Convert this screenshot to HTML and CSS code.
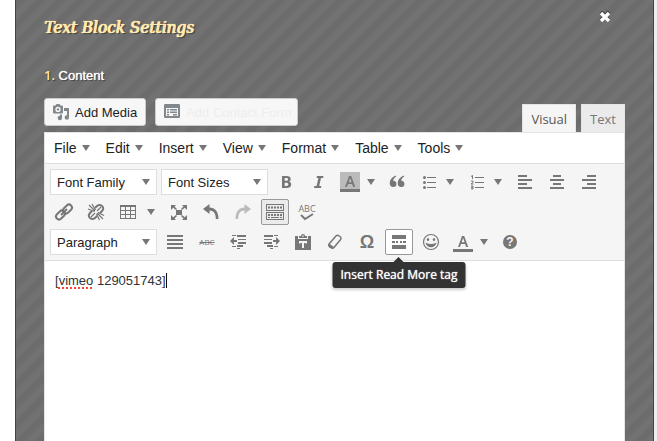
FILE: index.html
```html
<!DOCTYPE html>
<html lang="en">
<head>
<meta charset="utf-8">
<title>Text Block Settings</title>
<link rel="stylesheet" href="styles.css">
</head>
<body>
<main class="panel">
  <header class="panel-head">
    <h1>Text Block Settings</h1>
    <button class="close" type="button" aria-label="Close">
      <svg width="12" height="12" viewBox="0 0 12 12"><path d="M2 2l8 8M10 2l-8 8" stroke="#fff" stroke-width="3.4"/></svg>
    </button>
  </header>
  <h2><span class="step">1.</span> Content</h2>

  <div class="media-row">
    <div class="media-buttons">
      <button class="media" type="button">
        <svg width="18" height="18" viewBox="0 0 18 18" fill="#82878c"><path fill-rule="evenodd" d="M2 2.500h1.500l1-1.500h3l1 1.500h1.500q1 0 1 1v6q0 1-1 1H2q-1 0-1-1v-6q0-1 1-1zM6 3.800a2.600 2.600 0 1 0 0 5.200 2.600 2.600 0 0 0 0-5.200z"/><circle cx="6" cy="6.400" r="1.200"/><path d="M12 5h5v9.500a2.200 2.200 0 1 1-2-2.200V8h-3zM8 11.500h2v3.500a2.200 2.200 0 1 1-2-2.200z"/></svg>
        Add Media
      </button>
      <button class="media faded" type="button">
        <svg width="18" height="18" viewBox="0 0 18 18"><path fill="#82878c" fill-rule="evenodd" d="M2 1h14q1 0 1 1v12q0 1-1 1H2q-1 0-1-1V2q0-1 1-1zM3 5v8h12V5z"/><path fill="#82878c" d="M4 6h2v1.500H4zM4 8.500h2V10H4zM4 11h2v1.500H4zM7 6h7v1.500H7zM7 8.500h7V10H7zM10 11h4v1.500h-4z"/></svg>
        Add Contact Form
      </button>
    </div>
    <div class="tabs">
      <button class="tab current" type="button">Visual</button>
      <button class="tab" type="button">Text</button>
    </div>
  </div>

  <section class="editor">
    <nav class="menubar">
      <button type="button">File</button>
      <button type="button">Edit</button>
      <button type="button">Insert</button>
      <button type="button">View</button>
      <button type="button">Format</button>
      <button type="button">Table</button>
      <button type="button">Tools</button>
    </nav>

    <div class="toolbar">
      <div class="tools">
        <label class="pick"><select aria-label="Font family"><option>Font Family</option></select></label>
        <label class="pick"><select aria-label="Font size"><option>Font Sizes</option></select></label>
        <button class="tool" type="button" aria-label="Bold"><svg viewBox="0 0 20 20"><path fill-rule="evenodd" d="M6 4h4.500c2.800 0 4.200 1.100 4.200 3 0 1.300-.7 2.300-1.900 2.600 1.600.3 2.400 1.300 2.400 2.900 0 2.200-1.600 3.500-4.400 3.500H6zM8.700 6.100v2.600h1.500c1.200 0 1.800-.4 1.800-1.300s-.6-1.300-1.800-1.300zM8.700 10.700v3.200h1.700c1.300 0 1.900-.5 1.900-1.600s-.7-1.600-2-1.600z"/></svg></button>
        <button class="tool" type="button" aria-label="Italic"><svg viewBox="0 0 20 20"><path d="M9 4h6.500l-.4 2h-2.100l-1.800 8h2.100l-.4 2H6l.4-2h2.200l1.800-8H8.500z"/></svg></button>
        <button class="tool color" type="button" aria-label="Background color"><span class="swatch filled"><svg viewBox="0 0 20 20"><path fill-rule="evenodd" d="M9 4h2.200l4 11h-2l-1.100-3.100H8L6.900 15H5zM10.100 6l-1.500 4.300h3z"/></svg></span></button>
        <button class="tool" type="button" aria-label="Blockquote"><svg viewBox="0 0 20 20"><path d="M9.300 4.500C6.900 6 6.300 7.400 6.200 8.800c1.700-.2 3.200 1 3.200 2.900A3.100 3.100 0 0 1 6.200 15C4 15 2.700 13.400 2.700 11c0-3.100 2-5.700 6-7.400zM17.300 4.500c-2.400 1.500-3 2.900-3.100 4.300 1.700-.2 3.200 1 3.200 2.900a3.100 3.100 0 0 1-3.200 3.300c-2.200 0-3.500-1.600-3.500-4 0-3.100 2-5.700 6-7.400z"/></svg></button>
        <button class="tool split" type="button" aria-label="Bulleted list"><svg viewBox="0 0 20 20"><path d="M8 5h9v1H8zM8 10h9v1H8zM8 15h9v1H8z"/><circle cx="5.500" cy="5.500" r="1.500"/><circle cx="5.500" cy="10.500" r="1.500"/><circle cx="5.500" cy="15.500" r="1.500"/></svg></button>
        <button class="tool split" type="button" aria-label="Numbered list"><svg viewBox="0 0 20 20"><path d="M8 5h9v1H8zM8 10h9v1H8zM8 15h9v1H8z"/><path fill="none" stroke="#777" d="M4 4.500l1.500-1V7M4 9h2v1.500l-2 1.500h2.500M4 14h2v3H4M4 15.500h2"/></svg></button>
        <button class="tool" type="button" aria-label="Align left"><svg viewBox="0 0 20 20"><path d="M3 3h9v2H3zM3 7h14v2H3zM3 11h9v2H3zM3 15h14v2H3z"/></svg></button>
        <button class="tool" type="button" aria-label="Align center"><svg viewBox="0 0 20 20"><path d="M6 3h8v2H6zM3 7h14v2H3zM6 11h8v2H6zM3 15h14v2H3z"/></svg></button>
        <button class="tool" type="button" aria-label="Align right"><svg viewBox="0 0 20 20"><path d="M8 3h9v2H8zM3 7h14v2H3zM8 11h9v2H8zM3 15h14v2H3z"/></svg></button>
      </div>

      <div class="tools">
        <button class="tool" type="button" aria-label="Insert link"><svg viewBox="0 0 20 20"><g fill="none" stroke="#777" stroke-width="2"><rect x="8.500" y="4" width="10" height="6" rx="3" transform="rotate(-45 13.500 7)"/><rect x="1.500" y="10" width="10" height="6" rx="3" transform="rotate(-45 6.500 13)"/><path d="M7 13l6-6"/></g></svg></button>
        <button class="tool" type="button" aria-label="Remove link"><svg viewBox="0 0 20 20"><g fill="none" stroke="#777" stroke-width="2"><path d="M9 6l2-2q2.500-2 5 0t0 5l-2 2M11 14l-2 2q-2.500 2-5 0t0-5l2-2"/><path stroke-width="1.200" d="M3 3l6 6M6 2l3.500 6M2 7l6.500 2.500M11 11l6 6M10.500 12l3 6M12 10.500l6 3M9 11l-4 4M11 9l4-4"/></g></svg></button>
        <button class="tool split wide" type="button" aria-label="Table"><svg viewBox="0 0 20 20"><path fill-rule="evenodd" d="M2 3h16v14H2zM3 5v3h4V5zM8 5v3h4V5zM13 5v3h4V5zM3 9v3h4V9zM8 9v3h4V9zM13 9v3h4V9zM3 13v3h4v-3zM8 13v3h4v-3zM13 13v3h4v-3z"/></svg></button>
        <button class="tool" type="button" aria-label="Fullscreen"><svg viewBox="0 0 20 20"><path d="M7 8h6v5H7zM2 3h5L5.500 4.500 8 7 7 8 4.200 5.800 2 8zM18 3h-5l1.500 1.500L12 7l1 1 2.800-2.200L18 8zM2 18h5l-1.500-1.500L8 14l-1-1-2.800 2.200L2 13zM18 18h-5l1.500-1.500L12 14l1-1 2.800 2.200L18 13z"/></svg></button>
        <button class="tool" type="button" aria-label="Undo"><svg viewBox="0 0 20 20"><path d="M8.500 2v3.500c5.500 0 9 4 9 11.500h-2.700c0-5.500-2-8.500-6.300-8.500V12L2 7z"/></svg></button>
        <button class="tool off" type="button" aria-label="Redo" disabled><svg viewBox="0 0 20 20"><path d="M11.500 2v3.500c-5.500 0-9 4-9 11.500h2.700c0-5.500 2-8.500 6.300-8.500V12L18 7z"/></svg></button>
        <button class="tool pressed" type="button" aria-label="Toolbar toggle"><svg viewBox="0 0 20 20"><path fill-rule="evenodd" d="M1 2h18v7H1zM2 3v5h16V3zM1 10h18v8H1zM2 11v6h16v-6z"/><path stroke="#777" stroke-width="2" stroke-dasharray="2 1" d="M3 5.500h14M3 13h14"/><path d="M3 15h2v1H3zM6 15h8v1H6zM15 15h2v1h-2z"/></svg></button>
        <button class="tool stacked" type="button" aria-label="Spellcheck"><span>ABC</span><svg viewBox="0 0 14 8"><path fill="none" stroke="#777" stroke-width="2" d="M1 2l4 4 8-5"/></svg></button>
      </div>

      <div class="tools">
        <label class="pick"><select aria-label="Block format"><option>Paragraph</option></select></label>
        <button class="tool" type="button" aria-label="Justify"><svg viewBox="0 0 20 20"><path d="M2 3h16v2H2zM2 7h16v2H2zM2 11h16v2H2zM2 15h16v2H2z"/></svg></button>
        <button class="tool strike" type="button" aria-label="Strikethrough"><s>ABC</s></button>
        <button class="tool" type="button" aria-label="Decrease indent"><svg viewBox="0 0 20 20"><path d="M3 3h4v1H3zM8 3h9v2H8zM9 7h8v1H9zM9 10h8v2H9zM8 13h6v2H8zM3 14h4v1H3zM8 16h3v1H8zM1 9l4-4v3h3v2H5v3z"/></svg></button>
        <button class="tool" type="button" aria-label="Increase indent"><svg viewBox="0 0 20 20"><path d="M3 3h9v2H3zM13 3h4v1h-4zM3 7h8v1H3zM3 10h8v2H3zM6 13h6v2H6zM13 14h4v1h-4zM9 16h3v1H9zM19 9l-4-4v3h-3v2h3v3z"/></svg></button>
        <button class="tool" type="button" aria-label="Paste as text"><svg viewBox="0 0 20 20"><path fill-rule="evenodd" d="M2 4h3v3h10V4h3v14H2zM6 9v2.500h1.500V11H9v5h2v-5h1.500v.5H14V9zM6 6V4h2a2 2 0 0 1 4 0h2v2zM9.300 3.500h1.400v1.200H9.300z"/></svg></button>
        <button class="tool" type="button" aria-label="Clear formatting"><svg viewBox="0 0 20 20"><path fill="none" stroke="#777" stroke-width="1.500" stroke-linejoin="round" d="M4 12l7-8q1-1 2.500-.5L15.500 5q1 1 .3 2.200L9 15.500q-1 1-2.500.5L4.300 14.500Q3 13.500 4 12z"/><path d="M4 11.500l5 3.500-1.500 1.500-3.500-1z"/></svg></button>
        <button class="tool omega" type="button" aria-label="Special character">Ω</button>
        <button class="tool hovered" type="button" aria-label="Insert Read More tag" aria-describedby="tip"><svg viewBox="0 0 20 20"><path d="M3 3h14v4H3zM3 9h3v2H3zM7 9h2v2H7zM11 9h2v2h-2zM14 9h3v2h-3zM3 13h14v4H3z"/></svg><span class="tooltip" id="tip" role="tooltip">Insert Read More tag</span></button>
        <button class="tool" type="button" aria-label="Emoticons"><svg viewBox="0 0 20 20"><circle cx="10" cy="10" r="7.500" fill="none" stroke="#777" stroke-width="1.200"/><ellipse cx="7" cy="7.500" rx="1.200" ry="1.600"/><ellipse cx="13" cy="7.500" rx="1.200" ry="1.600"/><path d="M4.500 10.500q5.500 3 11 0-1.200 4.700-5.500 4.700t-5.500-4.700z"/></svg></button>
        <button class="tool color" type="button" aria-label="Text color"><span class="swatch"><svg viewBox="0 0 20 20"><path fill-rule="evenodd" d="M9 4h2.200l4 11h-2l-1.100-3.100H8L6.900 15H5zM10.100 6l-1.500 4.300h3z"/></svg></span></button>
        <button class="tool help" type="button" aria-label="Help"><span>?</span></button>
      </div>
    </div>

    <div class="content" contenteditable="true" role="textbox" aria-label="Content" spellcheck="false">[<span class="misspelt">vimeo</span> 129051743]<span class="caret"></span></div>
  </section>
</main>
</body>
</html>
```
FILE: styles.css
```css
* { box-sizing: border-box; }

body {
  margin: 0;
  background: linear-gradient(to right, #fff 50%, #eee 50%);
  font-family: "Liberation Sans", Arial, sans-serif;
  font-size: 13px;
}

button { font: inherit; margin: 0; cursor: pointer; }

.panel {
  display: flex;
  flex-direction: column;
  min-height: 100vh;
  margin: 0 3px 0 15px;
  padding: 14px 28px 0;
  border: solid #444;
  border-width: 0 1px;
  background: linear-gradient(135deg, #6c6c6c 20%, #727272 30% 45%, #6c6c6c 55% 70%, #727272 80% 95%, #6f6f6f) 0 0 / 20px 20px;
}

.panel-head {
  display: flex;
  justify-content: space-between;
  align-items: flex-start;
}

h1 {
  margin: 0;
  color: #ffecb0;
  font: italic 17px/26px "DejaVu Serif Condensed", "DejaVu Serif", serif;
  text-shadow: 0 0 1px #ffecb0, 1px 0 0 #ffecb0, 2px 1px 1px #333;
}

.close {
  display: flex;
  margin: -3px 14px 0 0;
  padding: 0;
  border: 0;
  background: none;
  filter: drop-shadow(0 -1px 0 #333);
}

h2 {
  margin: 25px 0 0;
  color: #fff;
  font-size: 13px;
  font-weight: normal;
  line-height: 20px;
  text-shadow: 0 0 1px #fff, 1px 1px 1px #333;
}

.step {
  color: #ffe89c;
  font-family: "Open Sans", sans-serif;
  font-weight: 600;
  text-shadow: 1px 1px 1px #333;
}

.media-row {
  display: flex;
  justify-content: space-between;
  align-items: flex-end;
  margin-top: 12px;
}

.media-buttons { display: flex; gap: 9px; margin-bottom: 6px; }

.media {
  display: flex;
  align-items: center;
  gap: 5px;
  height: 28px;
  padding: 0 8px 0 7px;
  border: 1px solid #ccc;
  border-radius: 3px;
  background: #f7f7f7;
  color: #222;
}

.media.faded { color: #eee; padding-right: 5px; }

.tabs { display: flex; gap: 5px; }

.tab {
  height: 28px;
  padding: 0 8px;
  border: 1px solid #e5e5e5;
  border-bottom: 0;
  background: #ebebeb;
  color: #777;
  font: 13px/20px "Open Sans", sans-serif;
}

.tab.current { background: #f5f5f5; color: #555; }

.editor {
  display: flex;
  flex: 1;
  flex-direction: column;
  border: 1px solid #e5e5e5;
  border-bottom: 0;
  background: #fff;
}

.menubar {
  display: flex;
  padding: 0 1px;
  border-bottom: 1px solid #dedede;
}

.menubar button {
  display: flex;
  align-items: center;
  gap: 5px;
  height: 30px;
  padding: 0 8px;
  border: 0;
  background: none;
  color: #222;
  font-size: 14px;
}

.menubar button::after,
.pick::after,
.split::after,
.color::after {
  content: "";
  border: 4px solid transparent;
  border-top: 6px solid #777;
  border-bottom: 0;
}

.toolbar {
  display: flex;
  flex-direction: column;
  gap: 4px;
  padding: 5px;
  border-bottom: 1px solid #dedede;
  background: #f5f5f5;
}

.tools { display: flex; gap: 4px; }

.pick { display: grid; align-items: center; }

.pick select,
.pick::after { grid-area: 1 / 1; }

.pick::after { justify-self: end; margin-right: 7px; pointer-events: none; }

.pick select {
  width: 107px;
  height: 26px;
  padding: 0 6px;
  border: 1px solid #ddd;
  border-radius: 0;
  background: #fff;
  color: #222;
  font: inherit;
  appearance: none;
}

.tool {
  position: relative;
  display: flex;
  flex: none;
  align-items: center;
  justify-content: center;
  width: 28px;
  height: 26px;
  padding: 0;
  border: 1px solid transparent;
  border-radius: 2px;
  background: none;
  color: #777;
}

.tool svg { display: block; flex: none; width: 20px; height: 20px; fill: #777; }

.split { justify-content: space-between; width: 44px; padding: 0 4px 0 3px; }
.split.wide { width: 47px; padding-right: 5px; }
.color { justify-content: space-between; width: 43px; padding: 0 3px; }

.swatch { display: block; height: 20px; border-bottom: 3px solid #777; }
.swatch svg { height: 20px; margin-bottom: -3px; }
.swatch.filled { background: #bbb; }

.off { opacity: .45; }
.pressed { border-color: #999; background: #ebebeb; }
.hovered { border-color: #999; background: #fff; }

.stacked { flex-direction: column; font: 9px/9px "Open Sans", sans-serif; }
.stacked svg { width: 14px; height: 8px; }
.strike { font: 8px/12px "Open Sans", sans-serif; }
.omega { font: bold 18px/20px "Liberation Sans", sans-serif; }

.help span {
  width: 14px;
  height: 14px;
  border-radius: 50%;
  background: #777;
  color: #f5f5f5;
  font: bold 12px/14px "Liberation Sans", sans-serif;
}

.tooltip {
  position: absolute;
  top: 32px;
  left: 50%;
  z-index: 1;
  padding: 4px 8px;
  border-radius: 3px;
  background: #333;
  box-shadow: 0 2px 3px #0003;
  color: #fff;
  font: 500 12px/18px "Open Sans", sans-serif;
  text-shadow: 0 0 1px #fff;
  white-space: nowrap;
  transform: translateX(-50%);
}

.tooltip::before {
  content: "";
  position: absolute;
  bottom: 100%;
  left: 50%;
  margin-left: -5px;
  border: 5px solid transparent;
  border-top: 0;
  border-bottom-color: #333;
}

.content {
  flex: 1;
  padding: 10px;
  color: #333;
  line-height: 19px;
  outline: 0;
}

.misspelt { text-decoration: underline dotted #f43 2px; text-underline-offset: 2px; }
.caret { border-right: 1px solid #111; }
```
